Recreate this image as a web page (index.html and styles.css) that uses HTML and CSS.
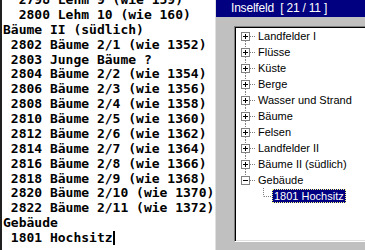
FILE: index.html
```html
<!DOCTYPE html>
<html lang="de">
<head>
    <meta charset="UTF-8">
    <meta name="viewport" content="width=device-width, initial-scale=1.0">
    <title>Inselfeld</title>
    <link rel="stylesheet" href="styles.css">
</head>
<body>
    <div class="editor">
<pre class="source">  2798 Lehm 9 (wie 159)
  2800 Lehm 10 (wie 160)
Bäume II (südlich)
 2802 Bäume 2/1 (wie 1352)
 2803 Junge Bäume ?
 2804 Bäume 2/2 (wie 1354)
 2806 Bäume 2/3 (wie 1356)
 2808 Bäume 2/4 (wie 1358)
 2810 Bäume 2/5 (wie 1360)
 2812 Bäume 2/6 (wie 1362)
 2814 Bäume 2/7 (wie 1364)
 2816 Bäume 2/8 (wie 1366)
 2818 Bäume 2/9 (wie 1368)
 2820 Bäume 2/10 (wie 1370)
 2822 Bäume 2/11 (wie 1372)
Gebäude
 1801 Hochsitz<span class="caret"></span></pre>
    </div>

    <div class="panel">
        <div class="titlebar">Inselfeld&nbsp; [ 21 / 11 ]</div>
        <div class="panel-body">
            <div class="tree">
                <div class="node">
                    <svg class="twig" width="20" height="16"><line class="dot" x1="9.5" y1="13" x2="9.5" y2="16"/><rect class="btn" x="5.5" y="4.5" width="8" height="8"/><line class="sign" x1="7" y1="8.5" x2="12" y2="8.5"/><line class="sign" x1="9.5" y1="6" x2="9.5" y2="11"/><line class="dot" x1="14" y1="8.5" x2="19" y2="8.5"/></svg>
                    <span class="label">Landfelder I</span>
                </div>
                <div class="node">
                    <svg class="twig" width="20" height="16"><line class="dot" x1="9.5" y1="0" x2="9.5" y2="4"/><line class="dot" x1="9.5" y1="13" x2="9.5" y2="16"/><rect class="btn" x="5.5" y="4.5" width="8" height="8"/><line class="sign" x1="7" y1="8.5" x2="12" y2="8.5"/><line class="sign" x1="9.5" y1="6" x2="9.5" y2="11"/><line class="dot" x1="14" y1="8.5" x2="19" y2="8.5"/></svg>
                    <span class="label">Flüsse</span>
                </div>
                <div class="node">
                    <svg class="twig" width="20" height="16"><line class="dot" x1="9.5" y1="0" x2="9.5" y2="4"/><line class="dot" x1="9.5" y1="13" x2="9.5" y2="16"/><rect class="btn" x="5.5" y="4.5" width="8" height="8"/><line class="sign" x1="7" y1="8.5" x2="12" y2="8.5"/><line class="sign" x1="9.5" y1="6" x2="9.5" y2="11"/><line class="dot" x1="14" y1="8.5" x2="19" y2="8.5"/></svg>
                    <span class="label">Küste</span>
                </div>
                <div class="node">
                    <svg class="twig" width="20" height="16"><line class="dot" x1="9.5" y1="0" x2="9.5" y2="4"/><line class="dot" x1="9.5" y1="13" x2="9.5" y2="16"/><rect class="btn" x="5.5" y="4.5" width="8" height="8"/><line class="sign" x1="7" y1="8.5" x2="12" y2="8.5"/><line class="sign" x1="9.5" y1="6" x2="9.5" y2="11"/><line class="dot" x1="14" y1="8.5" x2="19" y2="8.5"/></svg>
                    <span class="label">Berge</span>
                </div>
                <div class="node">
                    <svg class="twig" width="20" height="16"><line class="dot" x1="9.5" y1="0" x2="9.5" y2="4"/><line class="dot" x1="9.5" y1="13" x2="9.5" y2="16"/><rect class="btn" x="5.5" y="4.5" width="8" height="8"/><line class="sign" x1="7" y1="8.5" x2="12" y2="8.5"/><line class="sign" x1="9.5" y1="6" x2="9.5" y2="11"/><line class="dot" x1="14" y1="8.5" x2="19" y2="8.5"/></svg>
                    <span class="label">Wasser und Strand</span>
                </div>
                <div class="node">
                    <svg class="twig" width="20" height="16"><line class="dot" x1="9.5" y1="0" x2="9.5" y2="4"/><line class="dot" x1="9.5" y1="13" x2="9.5" y2="16"/><rect class="btn" x="5.5" y="4.5" width="8" height="8"/><line class="sign" x1="7" y1="8.5" x2="12" y2="8.5"/><line class="sign" x1="9.5" y1="6" x2="9.5" y2="11"/><line class="dot" x1="14" y1="8.5" x2="19" y2="8.5"/></svg>
                    <span class="label">Bäume</span>
                </div>
                <div class="node">
                    <svg class="twig" width="20" height="16"><line class="dot" x1="9.5" y1="0" x2="9.5" y2="4"/><line class="dot" x1="9.5" y1="13" x2="9.5" y2="16"/><rect class="btn" x="5.5" y="4.5" width="8" height="8"/><line class="sign" x1="7" y1="8.5" x2="12" y2="8.5"/><line class="sign" x1="9.5" y1="6" x2="9.5" y2="11"/><line class="dot" x1="14" y1="8.5" x2="19" y2="8.5"/></svg>
                    <span class="label">Felsen</span>
                </div>
                <div class="node">
                    <svg class="twig" width="20" height="16"><line class="dot" x1="9.5" y1="0" x2="9.5" y2="4"/><line class="dot" x1="9.5" y1="13" x2="9.5" y2="16"/><rect class="btn" x="5.5" y="4.5" width="8" height="8"/><line class="sign" x1="7" y1="8.5" x2="12" y2="8.5"/><line class="sign" x1="9.5" y1="6" x2="9.5" y2="11"/><line class="dot" x1="14" y1="8.5" x2="19" y2="8.5"/></svg>
                    <span class="label">Landfelder II</span>
                </div>
                <div class="node">
                    <svg class="twig" width="20" height="16"><line class="dot" x1="9.5" y1="0" x2="9.5" y2="4"/><line class="dot" x1="9.5" y1="13" x2="9.5" y2="16"/><rect class="btn" x="5.5" y="4.5" width="8" height="8"/><line class="sign" x1="7" y1="8.5" x2="12" y2="8.5"/><line class="sign" x1="9.5" y1="6" x2="9.5" y2="11"/><line class="dot" x1="14" y1="8.5" x2="19" y2="8.5"/></svg>
                    <span class="label">Bäume II (südlich)</span>
                </div>
                <div class="node">
                    <svg class="twig" width="20" height="16"><line class="dot" x1="9.5" y1="0" x2="9.5" y2="4"/><rect class="btn" x="5.5" y="4.5" width="8" height="8"/><line class="sign" x1="7" y1="8.5" x2="12" y2="8.5"/><line class="dot" x1="14" y1="8.5" x2="19" y2="8.5"/></svg>
                    <span class="label">Gebäude</span>
                </div>
                <div class="node">
                    <svg class="twig" width="36" height="16"><line class="dot" x1="27.5" y1="0" x2="27.5" y2="8.5"/><line class="dot" x1="28" y1="8.5" x2="35" y2="8.5"/></svg>
                    <span class="label selected">1801 Hochsitz</span>
                </div>
            </div>
        </div>
    </div>
</body>
</html>
```

FILE: styles.css
```css
html, body { margin: 0; height: 100%; }
body { display: flex; height: 250px; overflow: hidden; background: #c0c0c0; }

.editor { width: 213px; flex: none; background: #fff; border-left: 2px solid #202020; overflow: hidden; }
.source { margin: -7px 0 0 0; padding-left: 1px; font-family: "DejaVu Sans Mono", monospace; font-weight: bold; font-size: 13px; line-height: 14.875px; color: #000; }
.caret { display: inline-block; width: 2px; height: 14px; background: #000; vertical-align: -3px; }

.panel { flex: 1; display: flex; flex-direction: column; border-left: 1px solid #e0e0e0; overflow: hidden; }
.titlebar { height: 17px; flex: none; background: #000080; color: #fff; font-family: "Liberation Sans", Arial, sans-serif; font-size: 12px; letter-spacing: -0.2px; line-height: 17px; padding-left: 15px; white-space: nowrap; }
.panel-body { flex: 1; padding: 9px 0 6px 18px; }

.tree { width: 200px; height: 212px; background: #fff; border: 1px solid; border-color: #808080 #fff #fff #808080; box-shadow: inset 1px 1px #000, inset -1px -1px #dfdfdf; padding: 1px; font-family: "Liberation Sans", Arial, sans-serif; font-size: 11px; color: #000; }
.node { display: flex; align-items: center; height: 16px; white-space: nowrap; }
.twig { flex: none; display: block; }
.dot { stroke: #808080; stroke-width: 1; stroke-dasharray: 1 1; }
.btn { fill: #fff; stroke: #808080; stroke-width: 1; }
.sign { stroke: #000; stroke-width: 1; }
.label { padding: 0 2px; line-height: 14px; }
.selected { background: #000080; color: #fff; outline: 1px dotted #ffff80; outline-offset: -1px; }
```
